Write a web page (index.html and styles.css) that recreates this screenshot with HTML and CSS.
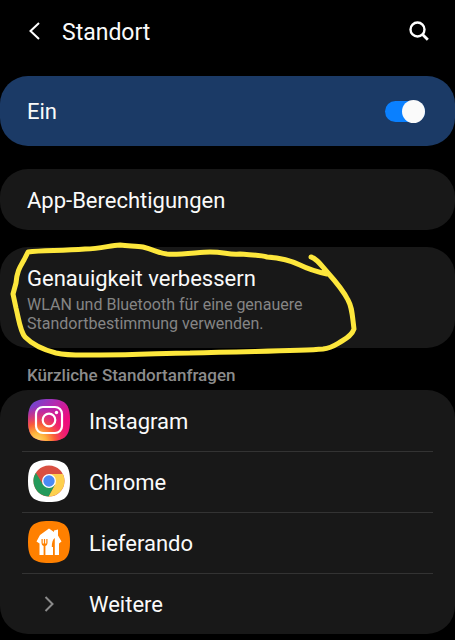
FILE: index.html
```html
<!DOCTYPE html>
<html lang="de">
<head>
    <meta charset="UTF-8">
    <meta name="viewport" content="width=device-width, initial-scale=1.0">
    <title>Standort</title>
    <link rel="stylesheet" href="styles.css">
</head>
<body>
    <header class="topbar">
        <button type="button" class="icon-button" aria-label="Zurück">
            <svg width="14" height="20" viewBox="0 0 14 20"><path d="M12 2 3.500 10 12 18" fill="none" stroke="#fff" stroke-width="2"/></svg>
        </button>
        <h1>Standort</h1>
        <button type="button" class="icon-button search" aria-label="Suchen">
            <svg width="20" height="20" viewBox="0 0 20 20" fill="none" stroke="#fff"><circle cx="8.500" cy="8.500" r="7" stroke-width="2.400"/><path d="m13.300 13.300 5.500 5.500" stroke-width="2.800"/></svg>
        </button>
    </header>

    <main>
        <label class="card switch-card">
            <span>Ein</span>
            <input type="checkbox" class="switch" role="switch" checked>
        </label>

        <a class="card permissions" href="#">App-Berechtigungen</a>

        <a class="card accuracy" href="#">
            <span>Genauigkeit verbessern</span>
            <small>WLAN und Bluetooth für eine genauere Standortbestimmung verwenden.</small>
            <svg class="marker" width="355" height="120" viewBox="5 240 355 120">
                <path d="M311 257C316 258 321 265 328 273C337 283 344 292 348 300C352 307 352 313 354 329C352 335 347 338 342 341C335 345 332 348 323 349C300 351 260 351 190 353C165 353 140 355 100 355C80 355 70 356 56 353C40 349 32 344 25 337C20 331 19 320 16 308L13 294L16 283C17 271 20 267 24 260L28 252C42 250 60 251 85 249C102 249 110 245 120 245C130 246 137 246 143 247C155 250 158 253 167 254C180 255 200 252 210 252C225 252 228 255 240 254C250 255 260 255 267 257C280 258 290 260 300 265C310 270 318 272 327 274"/>
            </svg>
        </a>

        <h2>Kürzliche Standortanfragen</h2>

        <ul class="card app-list">
            <li><a href="#">
                <svg class="app-icon" viewBox="0 0 42 42">
                    <defs>
                        <linearGradient id="igBase" x1="0" y1="0" x2="1" y2="1">
                            <stop offset="0" stop-color="#5a50d8"/>
                            <stop offset=".35" stop-color="#b02bb4"/>
                            <stop offset=".7" stop-color="#ee0c7c"/>
                            <stop offset="1" stop-color="#f0147a"/>
                        </linearGradient>
                        <radialGradient id="igGlow" cx=".22" cy="1.020" r=".85">
                            <stop offset="0" stop-color="#ffdd70"/>
                            <stop offset=".25" stop-color="#ffb43c"/>
                            <stop offset=".5" stop-color="#fa5d38"/>
                            <stop offset="1" stop-color="#f0147a" stop-opacity="0"/>
                        </radialGradient>
                    </defs>
                    <path d="M21 0C37 0 42 5 42 21S37 42 21 42 0 37 0 21 5 0 21 0Z" fill="url(#igBase)"/>
                    <path d="M21 0C37 0 42 5 42 21S37 42 21 42 0 37 0 21 5 0 21 0Z" fill="url(#igGlow)"/>
                    <g fill="none" stroke="#fff" stroke-width="2.200">
                        <rect x="8" y="8" width="26" height="26" rx="7"/>
                        <circle cx="21" cy="21" r="6.300"/>
                    </g>
                    <circle cx="28.500" cy="13.500" r="1.700" fill="#fff"/>
                </svg>
                <span>Instagram</span>
            </a></li>
            <li><a href="#">
                <svg class="app-icon" viewBox="0 0 42 42">
                    <path d="M21 0C37 0 42 5 42 21S37 42 21 42 0 37 0 21 5 0 21 0Z" fill="#fff"/>
                    <circle cx="21" cy="21" r="15.500" fill="#d94f41"/>
                    <path d="M21 14H34.850A15.500 15.500 0 0 1 20.500 36.490L27.060 24.500Z" fill="#fdd04e"/>
                    <path d="M7.850 12.790A15.500 15.500 0 0 0 20.500 36.490L27.060 24.500 21 28 14.940 24.500Z" fill="#249a5a"/>
                    <circle cx="21" cy="21" r="7" fill="#fff"/>
                    <circle cx="21" cy="21" r="5.700" fill="#4a8af4"/>
                </svg>
                <span>Chrome</span>
            </a></li>
            <li><a href="#">
                <svg class="app-icon" viewBox="0 0 42 42">
                    <path d="M21 0C37 0 42 5 42 21S37 42 21 42 0 37 0 21 5 0 21 0Z" fill="#ff8000"/>
                    <path d="M21 7.500 26 11V9.500L30 8.500V14.500L33.500 20.500 31 22.500V34H11.500V22.500L8.500 20.500 12 14Z" fill="#fff"/>
                    <path d="M13.500 18V22Q13.500 24.500 15.600 25V34H17.400V25Q19.500 24.500 19.500 22V18H18.300V22.500H17.100V18H15.900V22.500H14.700V18ZM26.800 17Q23.800 19 23.800 26H25V34H26.800Z" fill="#ff8000"/>
                </svg>
                <span>Lieferando</span>
            </a></li>
            <li><a href="#">
                <svg class="app-icon" viewBox="0 0 42 42"><path d="m17.500 15 7 7-7 7" fill="none" stroke="#8a8a8a" stroke-width="2"/></svg>
                <span>Weitere</span>
            </a></li>
        </ul>
    </main>
</body>
</html>
```

FILE: styles.css
```css
* {
    box-sizing: border-box;
}
body {
    margin: 0;
    background-color: #000;
    color: #fafafa;
    font-family: Roboto, sans-serif;
    font-size: 22px;
    line-height: 26px;
}
a {
    color: inherit;
    text-decoration: none;
}
.topbar {
    display: flex;
    align-items: center;
    height: 76px;
    padding: 0 26px 14px 27px;
}
.topbar h1 {
    flex: 1;
    margin: 0 0 0 21px;
    padding-top: 3px;
    font-size: 23px;
    font-weight: 400;
}
.icon-button {
    display: flex;
    padding: 0;
    border: none;
    background: none;
    cursor: pointer;
}
.card {
    display: flex;
    border-radius: 28px;
    background-color: #181818;
}
.switch-card {
    align-items: center;
    justify-content: space-between;
    height: 70px;
    padding: 0 30px 0 27px;
    background-color: #1b3a66;
}
.switch-card span {
    padding-top: 2px;
}
.switch {
    display: flex;
    align-items: center;
    justify-content: flex-end;
    width: 40px;
    height: 21px;
    margin: 0;
    border-radius: 11px;
    background-color: #0a80ff;
    appearance: none;
}
.switch::before {
    content: "";
    width: 23px;
    height: 23px;
    flex: none;
    border-radius: 50%;
    background-color: #fafafa;
}
.switch:not(:checked) {
    justify-content: flex-start;
    background-color: #777;
}
.permissions {
    margin-top: 23px;
    padding: 19px 27px 16px;
}
.accuracy {
    position: relative;
    flex-direction: column;
    margin-top: 17px;
    padding: 19px 27px 15px;
}
.accuracy small {
    max-width: 300px;
    margin-top: 3px;
    color: #858585;
    font-size: 16px;
    line-height: 19px;
}
/* hand-drawn line around the entry, runs over the card edge */
.marker {
    position: absolute;
    top: -7px;
    left: 5px;
    pointer-events: none;
}
.marker path {
    fill: none;
    stroke: #fde73c;
    stroke-width: 5;
    stroke-linecap: round;
    stroke-linejoin: round;
}
h2 {
    margin: 17px 27px 5px;
    color: #8c8c8c;
    font-size: 17px;
    font-weight: 500;
    line-height: 20px;
}
.app-list {
    flex-direction: column;
    margin: 0;
    padding: 1px 22px 0;
    list-style: none;
}
.app-list li + li {
    border-top: 1px solid #333;
}
.app-list a {
    display: flex;
    align-items: center;
    gap: 19px;
    height: 60px;
    padding: 0 6px 2px;
}
.app-list span {
    padding-top: 3px;
}
.app-icon {
    width: 42px;
    height: 42px;
}
```
